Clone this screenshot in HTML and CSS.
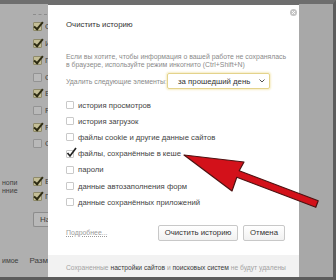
FILE: index.html
```html
<!DOCTYPE html>
<html lang="ru">
<head>
    <meta charset="UTF-8">
    <meta name="viewport" content="width=device-width, initial-scale=1.0">
    <title>Очистить историю</title>
    <link rel="stylesheet" href="styles.css">
</head>
<body>
    <div class="screen">
        <!-- страница настроек под затемнением -->
        <div class="page">
            <div class="page-rule"></div>
            <div class="p-item"><span class="p-box on"></span>О</div>
            <div class="p-item"><span class="p-box on"></span>И</div>
            <div class="p-item"><span class="p-box on"></span>П</div>
            <div class="p-item"><span class="p-box"></span>С</div>
            <div class="p-item"><span class="p-box on"></span>В</div>
            <div class="p-item"><span class="p-box"></span>Р</div>
            <div class="p-item"><span class="p-box on"></span>Р</div>
            <div class="p-item"><span class="p-box"></span>С</div>

            <div class="p-group">
                <div class="side-note">нопи<br>нние</div>
                <div class="p-col">
                    <div class="p-item short"><span class="p-box on"></span>В</div>
                    <div class="p-item short"><span class="p-box on"></span>П</div>
                </div>
            </div>
            <div class="p-btn">На</div>
            <div class="p-bottom">
                <span class="side-word">имое</span>
                <span>Разм</span>
            </div>
        </div>

        <!-- диалог -->
        <div class="dialog">
            <div class="dialog-head">
                <h1>Очистить историю</h1>
                <span class="close">
                    <svg width="7" height="7" viewBox="0 0 7 7"><circle cx="3.5" cy="3.5" r="3.5" fill="#c4c4c4"/><path d="M2 2 L5 5 M5 2 L2 5" stroke="#fff" stroke-width="0.9"/></svg>
                </span>
            </div>
            <p class="desc">Если вы хотите, чтобы информация о вашей работе не сохранялась<br>в браузере, используйте режим инкогнито (Ctrl+Shift+N)</p>

            <div class="range-row">
                <span class="range-label">Удалить следующие элементы:</span>
                <div class="select">
                    <span>за прошедший день</span>
                    <svg width="6" height="4" viewBox="0 0 6 4"><path d="M0.5 0.5 L3 3 L5.5 0.5" fill="none" stroke="#555" stroke-width="1"/></svg>
                </div>
            </div>

            <ul class="items">
                <li><span class="box"></span>история просмотров</li>
                <li><span class="box"></span>история загрузок</li>
                <li><span class="box"></span>файлы cookie и другие данные сайтов</li>
                <li><span class="box checked"><svg class="tick" width="11" height="11" viewBox="0 0 11 11"><path d="M1.5 6 L4 9 L10 1" fill="none" stroke="#222" stroke-width="1.7"/></svg></span>файлы, сохранённые в кеше</li>
                <li><span class="box"></span>пароли</li>
                <li><span class="box"></span>данные автозаполнения форм</li>
                <li><span class="box"></span>данные сохранённых приложений</li>
            </ul>

            <div class="actions">
                <a class="more" href="#">Подробнее...</a>
                <button class="btn wide">Очистить историю</button>
                <button class="btn">Отмена</button>
            </div>

            <div class="footer">
                Сохраненные <b>настройки сайтов</b> и <b>поисковых систем</b> не будут удалены
            </div>
        </div>

        <div class="gutter"></div>

        <!-- красная стрелка поверх всего -->
        <svg class="arrow" width="336" height="280" viewBox="0 0 336 280">
            <polygon points="184,155 244,162 239.2,170.7 318.2,200.7 315.8,207.3 236.8,177.3 232,191" fill="#d3111a" stroke="#4e1212" stroke-width="1.2" stroke-linejoin="round"/>
        </svg>
    </div>
</body>
</html>
```

FILE: styles.css
```css
* {
    margin: 0;
    padding: 0;
    box-sizing: border-box;
}

body {
    font-family: 'Liberation Sans', Arial, sans-serif;
    background: #6e6e6e;
}

.screen {
    position: relative;
    width: 336px;
    height: 280px;
    display: flex;
    border-top: 4px solid #6e6e6e;
    border-right: 3px solid #5c5c5c;
    border-bottom: 3px solid #5c5c5c;
    overflow: hidden;
}

/* ---- страница под затемнением ---- */

.page {
    width: 48px;
    flex: 0 0 48px;
    overflow: hidden;
    background: #afafaf;
    color: #3e3e3e;
    font-size: 8px;
    white-space: nowrap;
}

.page-rule {
    margin: 10px 0 3.6px 33px;
    width: 14px;
    border-top: 1px dashed #8c8c8c;
}

.p-item {
    height: 16.7px;
    display: flex;
    align-items: center;
    gap: 3px;
    padding-left: 33px;
}

.p-item.short {
    height: 15px;
    padding-left: 0;
}

.p-box {
    width: 9px;
    height: 9px;
    flex: 0 0 9px;
    border: 1px solid #939393;
    background: #b9b9b9;
    border-radius: 1px;
    position: relative;
}

.p-box.on {
    background: #c4be96;
    border-color: #8e8a6a;
}

.p-box.on::after {
    content: '';
    position: absolute;
    left: 2px;
    top: -3px;
    width: 3px;
    height: 8px;
    border-right: 2px solid #2d2b12;
    border-bottom: 2px solid #2d2b12;
    transform: rotate(40deg);
}

.p-group {
    display: flex;
    margin-top: 22.3px;
}

.side-note {
    width: 33px;
    flex: 0 0 33px;
    padding-left: 2px;
    margin-top: 4.5px;
    font-size: 7px;
    line-height: 8px;
}

.p-btn {
    margin: 7.5px 0 0 33px;
    height: 15px;
    border: 1px solid #8c8c8c;
    border-right: none;
    border-radius: 2px 0 0 2px;
    background: #b8b8b8;
    padding-left: 6px;
    line-height: 13px;
}

.p-bottom {
    display: flex;
    margin-top: 29px;
    line-height: 10px;
}

.side-word {
    width: 33px;
    padding-left: 2px;
    font-size: 7px;
}

/* ---- диалог ---- */

.dialog {
    width: 251px;
    flex: 0 0 251px;
    margin-top: 1px;
    background: #fff;
    display: flex;
    flex-direction: column;
    color: #333;
}

.dialog-head {
    display: flex;
    justify-content: space-between;
    align-items: flex-start;
    padding: 3.5px 2.5px 0 18px;
}

.dialog-head h1 {
    font-size: 7.8px;
    font-weight: normal;
    line-height: 10px;
    margin-top: 11.5px;
    color: #333;
}

.close {
    width: 7px;
    height: 7px;
    display: block;
}

.close svg {
    display: block;
}

.desc {
    margin-top: 23px;
    padding-left: 18px;
    font-size: 6.9px;
    line-height: 8px;
    color: #8a8a8a;
    white-space: nowrap;
}

.range-row {
    margin-top: 4px;
    padding-left: 18px;
    display: flex;
    align-items: center;
    height: 16px;
}

.range-label {
    flex: 0 0 101px;
    font-size: 6.9px;
    color: #8a8a8a;
}

.select {
    width: 103px;
    height: 16px;
    display: flex;
    align-items: center;
    justify-content: space-between;
    padding: 0 4px 0 10px;
    border: 1px solid #e4d38c;
    border-radius: 2px;
    box-shadow: 0 0 2px 1px #f6edc4;
    font-size: 7.8px;
    color: #333;
}

.items {
    list-style: none;
    margin-top: 8px;
    padding-left: 18px;
}

.items li {
    height: 16.2px;
    display: flex;
    align-items: center;
    gap: 4px;
    font-size: 7.7px;
    color: #444;
    white-space: nowrap;
}

.box {
    width: 8px;
    height: 8px;
    flex: 0 0 8px;
    border: 1px solid #c9c9c9;
    border-radius: 1px;
    background: #fff;
    position: relative;
}

.tick {
    position: absolute;
    left: -1px;
    top: -4px;
}

.actions {
    margin-top: 14.6px;
    height: 16px;
    display: flex;
    align-items: center;
    gap: 5px;
    padding: 0 14px 0 18px;
}

.more {
    margin-right: auto;
    font-size: 6.9px;
    color: #9a9a9a;
    text-decoration: underline dotted;
}

.btn {
    height: 16px;
    width: 42px;
    border: 1px solid #c8c8c8;
    border-radius: 2px;
    background: linear-gradient(#ffffff, #f1f1f1);
    font-family: inherit;
    font-size: 7.8px;
    color: #333;
}

.btn.wide {
    width: 80px;
}

.footer {
    margin-top: 14px;
    height: 22px;
    background: #f2f2f2;
    padding: 9px 0 0 18px;
    font-size: 6.7px;
    line-height: 8px;
    color: #a3a3a3;
    white-space: nowrap;
}

.footer b {
    font-weight: normal;
    color: #3a3a3a;
}

.gutter {
    flex: 1;
    background: #a8a8a8;
}

.arrow {
    position: absolute;
    top: -4px;
    left: 0;
    pointer-events: none;
}
```
